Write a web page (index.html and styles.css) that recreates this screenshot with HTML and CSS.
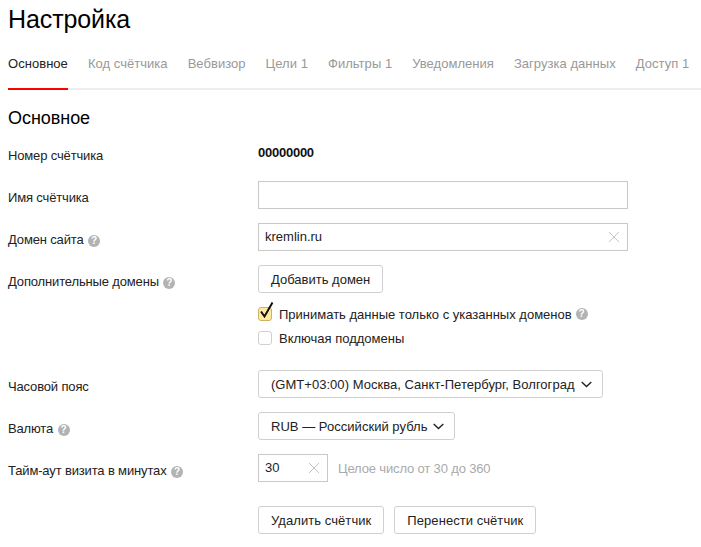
FILE: index.html
```html
<!DOCTYPE html>
<html lang="ru">
<head>
  <meta charset="UTF-8" />
  <title>Настройка</title>
  <link rel="stylesheet" href="styles.css">
</head>
<body>
  <h1 class="page-title">Настройка</h1>

  <div class="tabs">
    <a class="tab tab-active">Основное</a>
    <a class="tab">Код счётчика</a>
    <a class="tab">Вебвизор</a>
    <a class="tab">Цели 1</a>
    <a class="tab">Фильтры 1</a>
    <a class="tab">Уведомления</a>
    <a class="tab">Загрузка данных</a>
    <a class="tab">Доступ 1</a>
  </div>

  <h2 class="section-title">Основное</h2>

  <div class="row row-number">
    <div class="label">Номер счётчика</div>
    <div class="control number-value">00000000</div>
  </div>

  <div class="row">
    <div class="label">Имя счётчика</div>
    <div class="control"><div class="input input-wide"></div></div>
  </div>

  <div class="row">
    <div class="label">Домен сайта <span class="hint">?</span></div>
    <div class="control">
      <div class="input input-wide">
        <span class="input-text">kremlin.ru</span>
        <svg class="clear" width="12" height="12" viewBox="0 0 12 12"><path d="M1 1l10 10M11 1L1 11" stroke="#c4c4c4" fill="none"/></svg>
      </div>
    </div>
  </div>

  <div class="row row-domains">
    <div class="label">Дополнительные домены <span class="hint">?</span></div>
    <div class="control">
      <button class="btn">Добавить домен</button>
      <div class="check check-first">
        <span class="box box-on">
          <svg class="tick" width="18" height="19" viewBox="0 0 18 19"><path d="M3 10.5l3.5 5L14.5 1.5" stroke="#111" stroke-width="2" fill="none"/></svg>
        </span>
        <span>Принимать данные только с указанных доменов</span>
        <span class="hint">?</span>
      </div>
      <div class="check">
        <span class="box"></span>
        <span>Включая поддомены</span>
      </div>
    </div>
  </div>

  <div class="row">
    <div class="label">Часовой пояс</div>
    <div class="control">
      <button class="btn btn-select">(GMT+03:00) Москва, Санкт-Петербург, Волгоград
        <svg class="arrow" width="11" height="7" viewBox="0 0 11 7"><path d="M.7 1l4.8 4.6L10.3 1" stroke="#222" stroke-width="1.4" fill="none"/></svg>
      </button>
    </div>
  </div>

  <div class="row">
    <div class="label">Валюта <span class="hint">?</span></div>
    <div class="control">
      <button class="btn btn-select">RUB — Российский рубль
        <svg class="arrow" width="11" height="7" viewBox="0 0 11 7"><path d="M.7 1l4.8 4.6L10.3 1" stroke="#222" stroke-width="1.4" fill="none"/></svg>
      </button>
    </div>
  </div>

  <div class="row">
    <div class="label">Тайм-аут визита в минутах <span class="hint">?</span></div>
    <div class="control control-inline">
      <div class="input input-small">
        <span class="input-text">30</span>
        <svg class="clear" width="12" height="12" viewBox="0 0 12 12"><path d="M1 1l10 10M11 1L1 11" stroke="#c4c4c4" fill="none"/></svg>
      </div>
      <span class="note">Целое число от 30 до 360</span>
    </div>
  </div>

  <div class="actions">
    <button class="btn">Удалить счётчик</button>
    <button class="btn">Перенести счётчик</button>
  </div>
</body>
</html>
```

FILE: styles.css
```css
* {
  box-sizing: border-box;
}
body {
  margin: 0;
  padding: 0 0 0 8px;
  font-family: "Liberation Sans", Arial, sans-serif;
  font-size: 13px;
  color: #222;
  background: #fff;
  overflow: hidden;
}
.page-title {
  margin: 0;
  padding-top: 4px;
  height: 49px;
  font-size: 25px;
  line-height: 30px;
  font-weight: normal;
  letter-spacing: -0.1px;
  color: #000;
}
.tabs {
  display: flex;
  gap: 20px;
  height: 41px;
  border-bottom: 2px solid #eee;
  letter-spacing: 0.04px;
}
.tab {
  height: 41px;
  padding-top: 7px;
  line-height: 15px;
  color: #999;
  white-space: nowrap;
}
.tab-active {
  color: #222;
  border-bottom: 2px solid #f00;
}
.section-title {
  margin: 0;
  padding-top: 17px;
  height: 49px;
  font-size: 18px;
  line-height: 22px;
  font-weight: normal;
  letter-spacing: -0.05px;
  color: #000;
}
.row {
  display: flex;
  margin-bottom: 14px;
}
.row-number {
  height: 42px;
  margin-bottom: 0;
}
.label {
  width: 250px;
  flex: none;
  padding-top: 9px;
  line-height: 15px;
  letter-spacing: -0.15px;
}
.number-value {
  font-weight: bold;
  padding-top: 6px;
  line-height: 15px;
  color: #111;
  letter-spacing: -0.25px;
}
.control-inline {
  display: flex;
  align-items: center;
}
.hint {
  display: inline-block;
  width: 12px;
  height: 12px;
  margin-left: 1px;
  border-radius: 50%;
  background: #b3b3b3;
  color: #fff;
  font-size: 10px;
  font-weight: bold;
  line-height: 12px;
  text-align: center;
  vertical-align: 0;
  letter-spacing: 0;
}
.input {
  display: flex;
  align-items: center;
  justify-content: space-between;
  height: 28px;
  border: 1px solid #c9c9c9;
  padding: 0 7px 0 6px;
}
.input-wide {
  width: 370px;
}
.input-small {
  width: 70px;
}
.input-text {
  color: #222;
  margin-top: -2px;
}
.note {
  margin-left: 10px;
  color: #aaa;
  letter-spacing: -0.15px;
}
.btn {
  display: inline-flex;
  align-items: center;
  height: 28px;
  padding: 0 12px;
  border: 1px solid #d0d0d0;
  border-radius: 3px;
  background: #fff;
  font-family: inherit;
  font-size: 13px;
  color: #222;
  white-space: nowrap;
}
.btn-select {
  padding-right: 10px;
  letter-spacing: 0.03px;
}
.arrow {
  margin-left: 6px;
}
.row-domains {
  margin-bottom: 24px;
}
.check {
  display: flex;
  align-items: center;
  height: 16px;
  margin-top: 8px;
  line-height: 15px;
}
.check-first {
  margin-top: 13px;
}
.check .hint {
  margin-left: 4px;
}
.box {
  position: relative;
  width: 14px;
  height: 14px;
  margin-right: 7px;
  border: 1px solid #d0d0d0;
  border-radius: 3px;
  background: #fff;
}
.box-on {
  background: #ffeba0;
  border-color: #c9b36a;
}
.tick {
  position: absolute;
  left: -1px;
  top: -7px;
}
.actions {
  display: flex;
  gap: 10px;
  margin: 24px 0 0 250px;
}
.actions .btn {
  letter-spacing: 0.07px;
}
```
